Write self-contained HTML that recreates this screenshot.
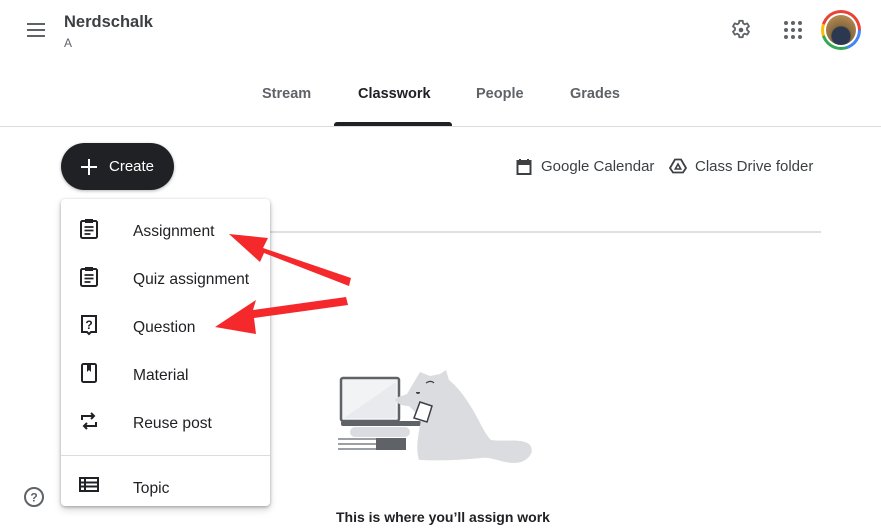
<!DOCTYPE html>
<html><head><meta charset="utf-8"><style>
*{margin:0;padding:0;box-sizing:border-box}
body{width:881px;height:531px;overflow:hidden;background:#fff;font-family:"Liberation Sans",Arial,sans-serif;color:#3c4043;position:relative}
.a{position:absolute}
.tab{position:absolute;top:86px;font-size:14.5px;font-weight:bold;color:#5f6368}
.mi{position:absolute;left:133px;font-size:15.6px;color:#202124}
.ic{position:absolute;left:79px}
</style></head><body>
<svg class="a" style="left:24px;top:21px" width="24" height="20" viewBox="0 0 24 20"><path d="M3 3h18M3 9h18M3 15h18" stroke="#5f6368" stroke-width="2"/></svg>
<div class="a" style="left:64px;top:13px;font-size:16.5px;font-weight:bold;color:#3c4043">Nerdschalk</div>
<div class="a" style="left:64px;top:36px;font-size:12px;color:#5f6368">A</div>
<svg class="a" style="left:729px;top:18px" width="24" height="24" viewBox="0 0 24 24"><path fill="none" stroke="#5f6368" stroke-width="1.8" stroke-linejoin="round" d="M10.3 2.8h3.4l.5 2.6 1.6.9 2.5-.9 1.7 2.9-2 1.8v1.8l2 1.8-1.7 2.9-2.5-.9-1.6.9-.5 2.6h-3.4l-.5-2.6-1.6-.9-2.5.9-1.7-2.9 2-1.8v-1.8l-2-1.8 1.7-2.9 2.5.9 1.6-.9z"/><circle cx="12" cy="12" r="2.3" fill="#5f6368"/></svg>
<svg class="a" style="left:783px;top:20px" width="20" height="20" viewBox="0 0 20 20" fill="#5f6368"><circle cx="3" cy="3" r="2"/><circle cx="10" cy="3" r="2"/><circle cx="17" cy="3" r="2"/><circle cx="3" cy="10" r="2"/><circle cx="10" cy="10" r="2"/><circle cx="17" cy="10" r="2"/><circle cx="3" cy="17" r="2"/><circle cx="10" cy="17" r="2"/><circle cx="17" cy="17" r="2"/></svg>
<div class="a" style="left:821px;top:10px;width:40px;height:40px;border-radius:50%;background:conic-gradient(#ea4335 0 25%,#4285f4 25% 45%,#34a853 45% 70%,#fbbc05 70% 80%,#ea4335 80%)"></div>
<div class="a" style="left:824px;top:13px;width:34px;height:34px;border-radius:50%;background:#fff"></div>
<div class="a" style="left:826px;top:15px;width:30px;height:30px;border-radius:50%;background:radial-gradient(circle at 50% 70%,#2b3850 0 35%,#8a6a40 40%,#c79a5a 100%)"></div>
<div class="tab" style="left:262px">Stream</div>
<div class="tab" style="left:358px;color:#202124">Classwork</div>
<div class="tab" style="left:476px">People</div>
<div class="tab" style="left:570px">Grades</div>
<div class="a" style="left:334px;top:122px;width:118px;height:4px;background:#202124;border-radius:3px 3px 0 0"></div>
<div class="a" style="left:0;top:126px;width:881px;height:1px;background:#dadce0"></div>
<div class="a" style="left:61px;top:143px;width:113px;height:47px;border-radius:24px;background:#202124;box-shadow:0 1px 3px rgba(0,0,0,.3)"></div>
<svg class="a" style="left:79px;top:157px" width="20" height="20"><path d="M10 2v16M2 10h16" stroke="#fff" stroke-width="2"/></svg>
<div class="a" style="left:109px;top:158px;font-size:15px;color:#fff">Create</div>
<svg class="a" style="left:516px;top:158px" width="16" height="18" viewBox="0 0 16 18"><rect x="1.5" y="3" width="13" height="13" fill="none" stroke="#3c4043" stroke-width="2"/><rect x="1.5" y="3" width="13" height="4" fill="#3c4043"/><path d="M4 1v3M12 1v3" stroke="#3c4043" stroke-width="2"/></svg>
<div class="a" style="left:541px;top:158px;font-size:15px;color:#3c4043">Google Calendar</div>
<svg class="a" style="left:669px;top:158px" width="18" height="16" viewBox="0 0 18 16"><path d="M6 1.5h6l5 8.5-3 4.5H4L1 10z" fill="none" stroke="#3c4043" stroke-width="1.8"/><path d="M9 6l2.7 5H6.3z" fill="none" stroke="#3c4043" stroke-width="1.6"/></svg>
<div class="a" style="left:695px;top:158px;font-size:15px;color:#3c4043">Class Drive folder</div>
<div class="a" style="left:270px;top:231px;width:551px;height:2px;background:#e0e0e0"></div>
<!-- illustration -->
<svg class="a" style="left:336px;top:368px" width="205" height="100" viewBox="0 0 205 100">
<rect x="5" y="10" width="58" height="43" rx="2" fill="#f1f3f4" stroke="#5f6368" stroke-width="2.5"/>
<path d="M8 50L60 14V50z" fill="#e8eaed"/>
<rect x="5" y="53" width="80" height="5" rx="2" fill="#5f6368"/>
<rect x="14" y="59" width="60" height="10" rx="5" fill="#dadce0"/>
<rect x="2" y="70" width="60" height="2" fill="#9aa0a6"/><rect x="2" y="75" width="60" height="2" fill="#9aa0a6"/><rect x="2" y="80" width="60" height="2" fill="#9aa0a6"/><rect x="40" y="70" width="30" height="12" fill="#5f6368"/>
<path d="M84 4l10 4 10-2 6 -4 3 10c10 8 18 20 24 30 8 14 12 24 18 30 12 2 30-2 38 4 6 6 2 14-8 18-14 4-28-6-40-4-20 2-40 3-62 2-4-12 0-28 2-40-4-6-8-10-12-14-6 0-12-2-14-6 2-4 8-4 12-6z" fill="#dadce0"/>
<path d="M84 34l12 4-5 16-13-4z" fill="#fff" stroke="#3c4043" stroke-width="1.5"/>
<path d="M80 24a2 2 0 1 0 4 0z" fill="#3c4043"/>
<path d="M90 15c3-2 6-2 8 0" stroke="#3c4043" stroke-width="1.2" fill="none"/>
</svg>
<div class="a" style="left:336px;top:509px;font-size:14px;font-weight:bold;color:#202124">This is where you’ll assign work</div>
<!-- menu -->
<div class="a" style="left:61px;top:199px;width:209px;height:307px;background:#fff;border-radius:4px;box-shadow:0 1px 3px rgba(0,0,0,.3),0 4px 8px rgba(0,0,0,.15)"></div>
<svg class="ic" style="top:218px" width="20" height="22" viewBox="0 0 20 22"><rect x="2" y="3" width="16" height="17" rx="1.5" fill="none" stroke="#202124" stroke-width="2"/><rect x="6" y="1" width="8" height="4" fill="#202124"/><path d="M5.5 9h9M5.5 12.5h9M5.5 16h6" stroke="#202124" stroke-width="1.8"/></svg>
<div class="mi" style="top:223px">Assignment</div>
<svg class="ic" style="top:266px" width="20" height="22" viewBox="0 0 20 22"><rect x="2" y="3" width="16" height="17" rx="1.5" fill="none" stroke="#202124" stroke-width="2"/><rect x="6" y="1" width="8" height="4" fill="#202124"/><path d="M5.5 9h9M5.5 12.5h9M5.5 16h6" stroke="#202124" stroke-width="1.8"/></svg>
<div class="mi" style="top:271px">Quiz assignment</div>
<svg class="ic" style="top:314px" width="20" height="22" viewBox="0 0 20 22"><path d="M3 2h14v16h-5l-2 2-2-2H3z" fill="none" stroke="#202124" stroke-width="2"/><text x="10" y="15" font-size="12" font-weight="bold" text-anchor="middle" fill="#202124" font-family="Liberation Sans">?</text></svg>
<div class="mi" style="top:319px">Question</div>
<svg class="ic" style="top:362px" width="20" height="22" viewBox="0 0 20 22"><rect x="3" y="2" width="14" height="18" rx="1.5" fill="none" stroke="#202124" stroke-width="2"/><path d="M8 2v8l2-2 2 2V2z" fill="#202124"/></svg>
<div class="mi" style="top:367px">Material</div>
<svg class="ic" style="top:410px" width="20" height="22" viewBox="0 0 20 22"><path d="M3 10V6h12M12 3l3 3-3 3M17 12v4H5M8 13l-3 3 3 3" fill="none" stroke="#202124" stroke-width="2"/></svg>
<div class="mi" style="top:415px">Reuse post</div>
<div class="a" style="left:61px;top:455px;width:209px;height:1px;background:#dadce0"></div>
<svg class="ic" style="top:476px" width="20" height="18" viewBox="0 0 20 18"><rect x="1" y="2" width="18" height="13" fill="none" stroke="#202124" stroke-width="2"/><path d="M1 6.5h18M1 10.5h18M6 2v13" stroke="#202124" stroke-width="2"/></svg>
<div class="mi" style="top:480px">Topic</div>
<svg class="a" style="left:23px;top:486px" width="22" height="22" viewBox="0 0 22 22"><circle cx="11" cy="11" r="9" fill="none" stroke="#5f6368" stroke-width="2"/><text x="11" y="15.5" font-size="12" font-weight="bold" text-anchor="middle" fill="#5f6368" font-family="Liberation Sans">?</text></svg>
<!-- arrows -->
<svg class="a" style="left:0;top:0" width="881" height="531"><g fill="#f5292b">
<path d="M351 278L263 248 268 238 229 234 260 262 264 253 349 286z"/>
<path d="M346 297L253 310 256 300 215 327 256 334 254 318 348 305z"/></g></svg>
</body></html>
